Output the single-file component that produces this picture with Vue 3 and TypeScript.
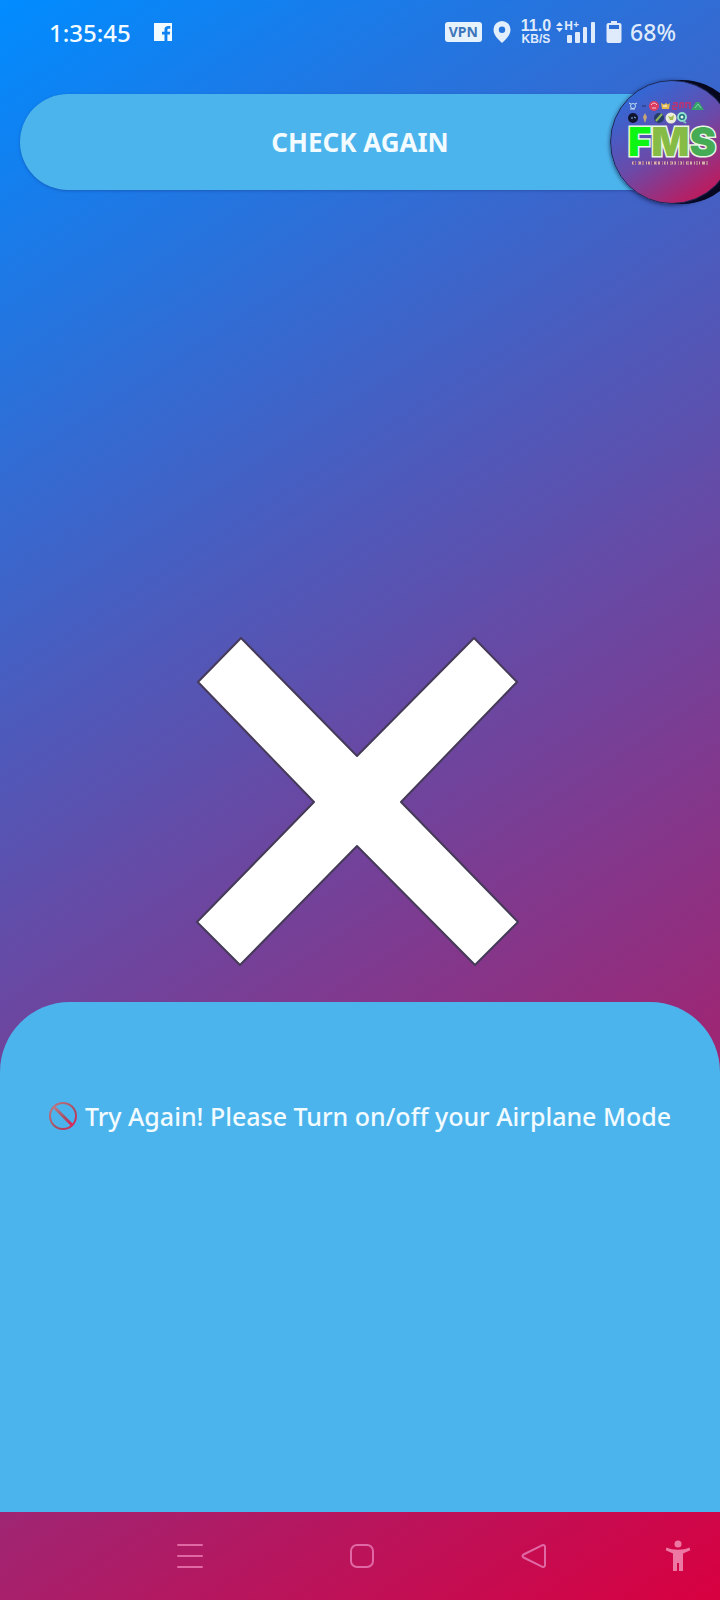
<script setup lang="ts">
import { ref } from 'vue'

const time = ref('1:35:45')
const battery = ref(68)
const speed = ref({ value: '11.0', unit: 'KB/S' })
const message = ref('Try Again! Please Turn on/off your Airplane Mode')
</script>

<template>
  <div class="screen">
    <header class="status">
      <div class="status-left">
        <span class="clock">{{ time }}</span>
        <svg class="fb" viewBox="0 0 20 20" width="20" height="20" aria-label="Facebook">
          <path fill="#f2fbff" fill-rule="evenodd" d="M1 1h18v18h-4.600v-6.400h2.400l.4-2.900h-2.800V8c0-.9.4-1.300 1.400-1.300h1.500V4.100c-.5-.1-1.300-.1-2.100-.1-2.300 0-3.700 1.300-3.700 3.700v2H9v2.900h2.500V19H1z" />
        </svg>
      </div>
      <div class="status-right">
        <span class="vpn">VPN</span>
        <svg class="pin" viewBox="0 0 18 24" width="18" height="24" aria-hidden="true">
          <path fill="#e2eefc" fill-rule="evenodd" d="M9 1a8.500 8.500 0 0 0-8.500 8.600C.5 15 5 19.500 9 23c4-3.500 8.500-8 8.500-13.400A8.500 8.500 0 0 0 9 1zm0 5.600a3.200 3.200 0 1 1 0 6.400 3.200 3.200 0 0 1 0-6.400z" />
        </svg>
        <span class="speed">
          <b class="speed-value">{{ speed.value }}</b>
          <b class="speed-unit">{{ speed.unit }}</b>
        </span>
        <span class="signal">
          <svg viewBox="0 0 42 24" width="42" height="24" aria-hidden="true">
            <g fill="#dfeafb">
              <path d="M1 6l3.500-4L8 6zM1 8l3.500 4L8 8z" />
              <rect x="12" y="15" width="5" height="8" rx="1" />
              <rect x="20" y="12" width="5" height="11" rx="1" />
              <rect x="28" y="7" width="4" height="16" rx="1" />
              <rect x="36" y="2" width="4" height="21" rx="1" />
            </g>
          </svg>
          <span class="network">H<sup>+</sup></span>
        </span>
        <svg class="cell" viewBox="0 0 16 24" width="16" height="24" aria-hidden="true">
          <path fill="#dfeafb" fill-rule="evenodd" d="M5 1h6v2h2.500A2 2 0 0 1 15.500 5v16a2 2 0 0 1-2 2h-11a2 2 0 0 1-2-2V5a2 2 0 0 1 2-2H5zM3 5v4h10V5z" />
        </svg>
        <span class="percent">{{ battery }}%</span>
      </div>
    </header>

    <main class="content">
      <div class="action">
        <button class="check" type="button">CHECK AGAIN</button>
      </div>

      <section class="stage">
        <svg class="cross" viewBox="0 0 324 332" width="324" height="332" role="img" aria-label="Failed">
          <path fill="#fff" stroke="#453a58" stroke-width="2" stroke-linejoin="round" d="M45 3L161 121 278 3l43 44-116 120 117 120-43 43-118-119L44 330 1 287l117-120L2 47z" />
        </svg>
      </section>

      <section class="sheet">
        <p class="message">
          <svg viewBox="0 0 28 28" width="28" height="28" aria-hidden="true">
            <defs>
              <linearGradient id="ban" x1="0" y1="0" x2="1" y2="1">
                <stop offset="0" stop-color="#bd7a86" />
                <stop offset=".6" stop-color="#a84d61" />
                <stop offset="1" stop-color="#e0225a" />
              </linearGradient>
            </defs>
            <g fill="none" stroke="url(#ban)" stroke-width="2">
              <circle cx="14" cy="14" r="13" />
              <path stroke-width="3" d="M5 5l18 18" />
            </g>
          </svg>
          <span>{{ message }}</span>
        </p>
      </section>
    </main>

    <nav class="nav">
      <button class="key" type="button" aria-label="Recent apps">
        <svg viewBox="0 0 26 26" width="26" height="26"><path d="M1 2h24M1 13h24M1 24h24" /></svg>
      </button>
      <button class="key" type="button" aria-label="Home">
        <svg viewBox="0 0 26 26" width="26" height="26"><rect x="2" y="2" width="22" height="22" rx="6" /></svg>
      </button>
      <button class="key" type="button" aria-label="Back">
        <svg viewBox="0 0 26 26" width="26" height="26"><path d="M2.500 11.500L21 2.300q3-1 3 2v17.400q0 3-3 2L2.500 14.500q-2-1.500 0-3z" /></svg>
      </button>
      <button class="key access" type="button" aria-label="Accessibility">
        <svg class="person" viewBox="0 0 26 34" width="26" height="34">
          <circle cx="13" cy="5" r="3.500" />
          <path d="M1.500 8.500C8 11.500 18 11.500 24.500 8.500l.8 2.800L18 14.500V32h-4v-8h-2v8H8V14.500L.7 11.300z" />
        </svg>
      </button>
    </nav>

    <div class="floating">
      <div class="bubble-back"></div>
      <button class="bubble" type="button" aria-label="FMS">
        <svg class="badges" viewBox="0 0 84 24" width="84" height="24" aria-hidden="true">
          <circle cx="5" cy="6" r="2.500" fill="none" stroke="#b9dcf5" />
          <path stroke="#cfe2f5" d="M1 3l2 1M9 3l-2 1M2 9h5" />
          <path stroke="#354a9d" stroke-width="2" d="M14 6h4" />
          <circle cx="26" cy="6" r="5" fill="#dc3d62" />
          <path fill="none" stroke="#f3c9cf" d="M23 5q3-4 6 0M24 8h4" />
          <path fill="#e2b84c" d="M33 3l3 1.500L38 3l2 1.500L42 3l-1 6h-7z" />
          <path stroke="#fff" d="M35 6h4" />
          <path fill="none" stroke="#a83a80" stroke-width="2" d="M45 3h4v3h-4v3h4M52 3v6M52 3h3v5M58 8V3h4v6" />
          <path fill="#38a06b" d="M63 10l5-8h3l5 8z" />
          <path fill="none" stroke="#78d9a0" d="M67 8l3-4 3 4" />
          <circle cx="5" cy="18" r="5" fill="#10142e" />
          <path stroke="#8ab9df" d="M3 18h2M6 17l2 1" />
          <path fill="#c5a477" d="M17 13l2 4-2 6-2-6z" />
          <circle cx="31" cy="18" r="5" fill="#253d69" />
          <path stroke="#90b85a" stroke-width="2" d="M28 21l6-7" />
          <circle cx="43" cy="18" r="5.500" fill="#e9edda" />
          <path fill="#a5bd4c" d="M40 16l3 1 3-2-1 5h-3z" />
          <circle cx="54" cy="17" r="4" fill="#1c6f7a" stroke="#8fe0cf" stroke-width="2" />
          <circle cx="54" cy="17" r="1.500" fill="#eaf9f4" />
          <path stroke="#7ac9c0" stroke-width="2" d="M55 21l3 2" />
        </svg>
        <span class="logo"><span class="f">F</span><span class="m">M</span><span class="s">S</span></span>
        <svg class="strap" viewBox="0 0 78 6" width="78" height="6" aria-hidden="true">
          <path stroke="#d9b3ae" stroke-width="3" stroke-dasharray="2 1 1 2 3 1 2 2 1 1" d="M0 3h78" />
          <path stroke="#7d3565" stroke-width="1" stroke-dasharray="3 2 1 3" d="M1 3h76" />
        </svg>
      </button>
    </div>
  </div>
</template>

<style>
body {
  margin: 0;
}
</style>

<style scoped>
.screen {
  position: relative;
  display: flex;
  flex-direction: column;
  min-height: 100vh;
  overflow: hidden;
  background: linear-gradient(147deg, #008cff, #d80040);
  font-family: 'Noto Sans', 'Liberation Sans', sans-serif;
  color: #f2fbff;
}

button {
  margin: 0;
  padding: 0;
  border: 0;
  background: none;
  font: inherit;
  color: inherit;
}

svg {
  display: block;
}

.status {
  display: flex;
  align-items: center;
  justify-content: space-between;
  height: 64px;
  padding: 0 44px 0 49px;
  font-size: 24px;
  font-weight: 500;
}

.status-left,
.status-right {
  display: flex;
  align-items: center;
}

.status-left {
  gap: 22px;
}

.status-right {
  color: #dfeafb;
}

.vpn {
  margin-right: 11px;
  padding: 0 4px;
  border-radius: 3px;
  background: #e6f2fc;
  color: #3d76ba;
  font-size: 14px;
  font-weight: 700;
  line-height: 20px;
}

.pin {
  margin-right: 10px;
}

.speed {
  display: flex;
  flex-direction: column;
  align-items: center;
  margin-right: 4px;
  font-family: 'Liberation Sans', sans-serif;
}

.speed-value {
  font-size: 16px;
  line-height: 14px;
}

.speed-unit {
  font-size: 12px;
  line-height: 12px;
}

.signal {
  position: relative;
  margin-right: 9px;
}

.network {
  position: absolute;
  top: 0;
  left: 9px;
  font-size: 12px;
  font-weight: 700;
  line-height: 12px;
}

.network sup {
  font-size: 10px;
  line-height: 8px;
  vertical-align: top;
}

.cell {
  margin-right: 8px;
}

.percent {
  font-size: 23px;
}

.content {
  display: flex;
  flex: 1;
  flex-direction: column;
}

.action {
  padding: 30px 20px 0;
}

.check {
  width: 100%;
  height: 96px;
  border-radius: 48px;
  background: #4cb4ec;
  box-shadow: 0 1px 3px rgba(20, 50, 130, 0.4);
  font-size: 26px;
  font-weight: 700;
}

.stage {
  display: flex;
  flex: 1;
  align-items: flex-end;
  justify-content: center;
  padding: 40px 4px 35px 0;
}

.sheet {
  min-height: 510px;
  box-sizing: border-box;
  padding: 94px 20px 40px;
  border-radius: 70px 70px 0 0;
  background: #4cb4ec;
}

.message {
  display: flex;
  align-items: center;
  justify-content: center;
  gap: 8px;
  margin: 0;
  font-size: 25px;
  font-weight: 500;
  line-height: 40px;
}

.message svg {
  flex: none;
}

.nav {
  display: grid;
  grid-template-columns: 172fr 172fr 172fr 100fr;
  height: 88px;
  padding-left: 14.5%;
}

.key {
  display: flex;
  align-items: center;
  justify-content: center;
}

.access {
  padding-left: 16px;
}

.key svg {
  fill: none;
  stroke: #e068a4;
  stroke-width: 2;
  stroke-linecap: round;
  stroke-linejoin: round;
}

.key .person {
  fill: #ee78a4;
  stroke: none;
}

.floating {
  position: absolute;
  top: 80px;
  right: -14px;
  width: 124px;
  height: 124px;
}

.bubble-back,
.bubble {
  position: absolute;
  inset: 0;
  border-radius: 50%;
}

.bubble-back {
  left: 10px;
  right: -10px;
  background: #07081d;
}

.bubble {
  display: flex;
  flex-direction: column;
  align-items: flex-start;
  box-sizing: border-box;
  padding: 19px 0 0 17px;
  border: 1px solid #1d2855;
  background: linear-gradient(146deg, #256fe0 5%, #6a4aa9 50%, #d0104c 95%);
  box-shadow: 0 1px 4px rgba(10, 15, 60, 0.7);
}

.logo {
  font-family: Inter, 'Liberation Sans', sans-serif;
  font-size: 40px;
  font-weight: 900;
  line-height: 36px;
  -webkit-text-stroke: 3px #eaf6e4;
  paint-order: stroke fill;
}

.f {
  color: #0cf513;
}

.m {
  color: #86bb45;
}

.s {
  color: #45ab55;
}

.strap {
  margin-left: 4px;
}
</style>
